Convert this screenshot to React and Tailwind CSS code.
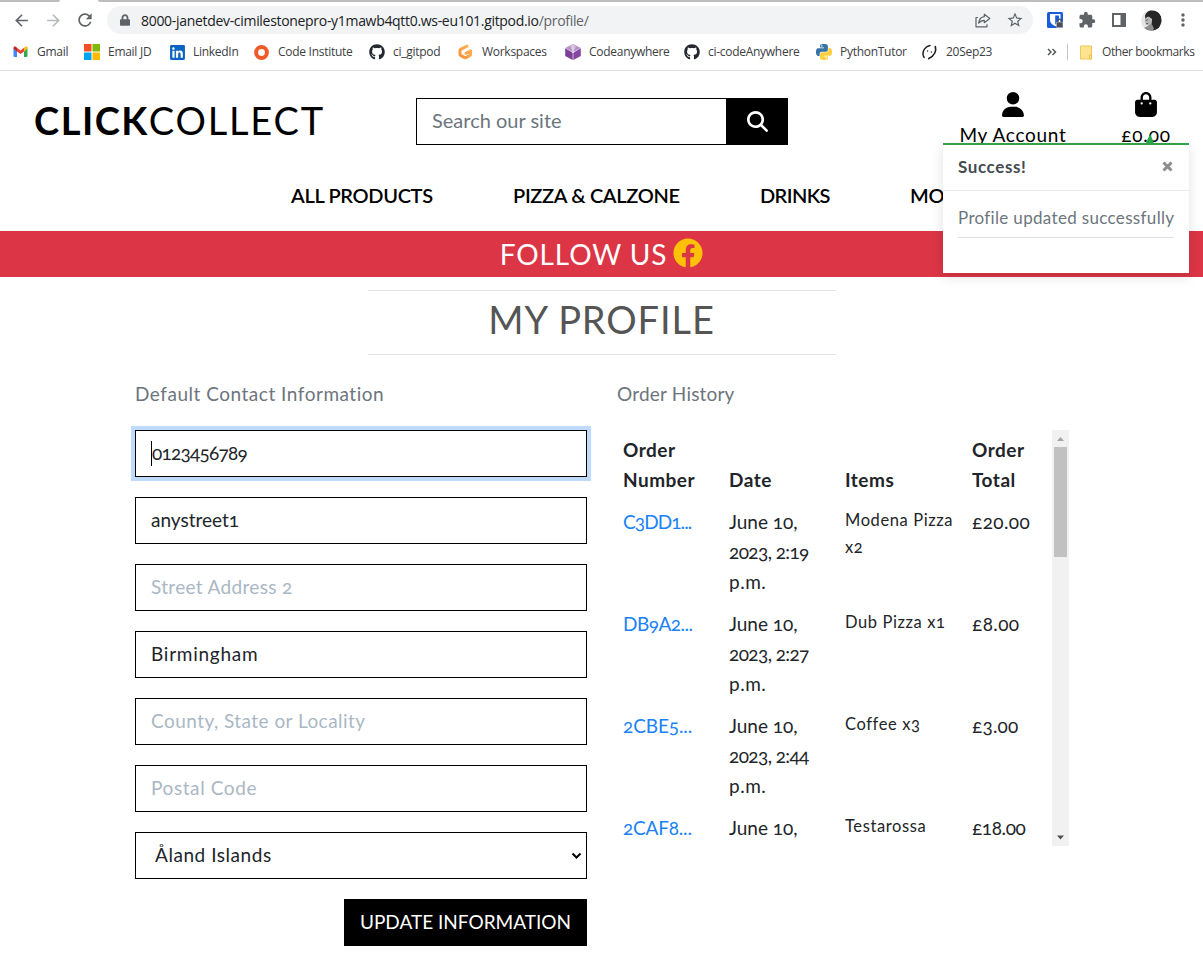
import React from "react";
import { FaFacebook, FaGithub, FaLinkedin, FaLock } from "react-icons/fa";
import { FaBagShopping, FaMagnifyingGlass, FaUser } from "react-icons/fa6";
import { MdArrowBack, MdArrowForward, MdRefresh, MdStarBorder, MdMoreVert, MdExtension } from "react-icons/md";

const GmailIcon = () => (
  <svg width="15" height="16" viewBox="0 0 15 16">
    <path d="M.5 4.2v7.9c0 .5.4.9.9.9H4V7.2z" fill="#4285f4" />
    <path d="M11 7.2V13h2.6c.5 0 .9-.4.9-.9V4.2z" fill="#34a853" />
    <path d="M11 3.8v3.6l3.5-2.6V4c0-1.3-1.4-1.9-2.3-1.2z" fill="#fbbc04" />
    <path d="M4 7.4V3.8l3.5 2.7L11 3.8v3.6L7.5 10z" fill="#ea4335" />
    <path d="M.5 4v.8L4 7.4V3.8L2.8 2.8C1.9 2.1.5 2.700.5 4z" fill="#c5221f" />
  </svg>
);

const WindowsIcon = () => (
  <svg width="16" height="16" viewBox="0 0 16 16">
    <path d="M0 0h7.500v7.500H0z" fill="#f25022" />
    <path d="M8.500 0H16v7.500H8.500z" fill="#7fba00" />
    <path d="M0 8.500h7.500V16H0z" fill="#00a4ef" />
    <path d="M8.500 8.500H16V16H8.500z" fill="#ffb900" />
  </svg>
);

const RingIcon = () => (
  <svg width="16" height="16" viewBox="0 0 16 16">
    <circle cx="7.500" cy="8.500" r="5.400" fill="none" stroke="#f05a28" strokeWidth="4" />
  </svg>
);

const GitpodIcon = () => (
  <svg width="16" height="16" viewBox="0 0 16 16">
    <defs>
      <linearGradient id="gp" x1="1" y1="0" x2="0" y2="1">
        <stop offset="0" stopColor="#ffb45b" />
        <stop offset="1" stopColor="#f9923a" />
      </linearGradient>
    </defs>
    <path d="M9 2.100 2.700 5.300c-.5.300-.7.600-.7 1.100v4c0 .5.200.8.700 1l4 2.200c.4.200.8.200 1.200 0l4-2.200c.5-.3.700-.6.700-1V6.800L8 9.300" fill="none" stroke="url(#gp)" strokeWidth="3" strokeLinecap="round" strokeLinejoin="round" />
  </svg>
);

const HexIcon = () => (
  <svg width="16" height="16" viewBox="0 0 16 16">
    <path d="M8 0l7.800 4L8 8.200.2 4z" fill="#b893c8" />
    <path d="M8 0l3.500 1.800L8 8.200 4.500 1.800z" fill="#cdb3d8" />
    <path d="M.200 4.300l7.500 4.400V16L.200 12z" fill="#7b3f98" />
    <path d="M15.800 4.300L8.300 8.700V16l7.500-4z" fill="#8347a0" />
    <path d="M8 1v8" stroke="#f3eaf6" strokeWidth="1" />
  </svg>
);

const PythonIcon = () => (
  <svg width="16" height="16" viewBox="0 0 24 24">
    <path fill="#3674a8" d="M14.25.18l.9.2.73.26.59.3.45.32.34.34.25.34.16.33.1.3.04.26.02.2-.01.13V8.5l-.05.63-.13.55-.21.46-.26.38-.3.31-.33.25-.35.19-.35.14-.33.1-.3.07-.26.04-.21.02H8.77l-.69.05-.59.14-.5.22-.41.27-.33.32-.27.35-.2.36-.15.37-.1.35-.07.32-.04.27-.02.21v3.06H3.17l-.21-.03-.28-.07-.32-.12-.35-.18-.36-.26-.36-.36-.35-.46-.32-.59-.28-.73-.21-.88-.14-1.05-.05-1.23.06-1.22.16-1.04.24-.87.32-.71.36-.57.4-.44.42-.33.42-.24.4-.16.36-.1.32-.05.24-.01h.16l.06.01h8.16v-.83H6.18l-.01-2.75-.02-.37.05-.34.11-.31.17-.28.25-.26.31-.23.38-.2.44-.18.51-.15.58-.12.64-.1.71-.06.77-.04.84-.02 1.27.05zm-6.3 1.98l-.23.33-.08.41.08.41.23.34.33.22.41.09.41-.09.33-.22.23-.34.08-.41-.08-.41-.23-.33-.33-.22-.41-.09-.41.09z" />
    <path fill="#ffcf3e" d="M21.04 6.11l.28.06.32.12.35.18.36.27.36.35.35.47.32.59.28.73.21.88.14 1.04.05 1.23-.06 1.23-.16 1.04-.24.86-.32.71-.36.57-.4.45-.42.33-.42.24-.4.16-.36.09-.32.05-.24.02-.16-.01h-8.22v.82h5.84l.01 2.76.02.36-.05.34-.11.31-.17.29-.25.25-.31.24-.38.2-.44.17-.51.15-.58.13-.64.09-.71.07-.77.04-.84.01-1.27-.04-1.07-.14-.9-.2-.73-.25-.59-.3-.45-.33-.34-.34-.25-.34-.16-.33-.1-.3-.04-.25-.02-.2.01-.13v-5.34l.05-.64.13-.54.21-.46.26-.38.3-.32.33-.24.35-.2.35-.14.33-.1.3-.06.26-.04.21-.02.13-.01h5.84l.69-.05.59-.14.5-.21.41-.28.33-.32.27-.35.2-.36.15-.36.1-.35.07-.32.04-.28.02-.21V6.07h2.09l.14.01zm-6.47 14.25l-.23.33-.08.41.08.41.23.33.33.23.41.08.41-.08.33-.23.23-.33.08-.41-.08-.41-.23-.33-.33-.23-.41-.08-.41.08z" />
  </svg>
);

const FaceIcon = () => (
  <svg width="16" height="16" viewBox="0 0 16 16" fill="none" stroke="#202124" strokeLinecap="round">
    <path d="M8 1.500C3.500 2.500.5 6.500 1 10.500c.1 1.100.5 2 1.100 2.800" strokeWidth="1.500" />
    <path d="M13.300 2.500c1.200 4-.5 9-6.500 12" strokeWidth="1.700" />
    <path d="M5.600 7v.1M9.300 8v.1" strokeWidth="1.400" />
  </svg>
);

const ShareIcon = () => (
  <svg width="16" height="15" viewBox="0 0 16 15" fill="none" stroke="#5f6368" strokeWidth="1.200" strokeLinejoin="round">
    <path d="M3 4.500H1v9.300h11v-2.600" />
    <path d="M9.300 1.200l5.500 4.300-5.500 4.200V7.300C7 7.300 5 8 3.700 10.200 4 6.500 6 4 9.300 3.700z" />
  </svg>
);

const ShieldIcon = () => (
  <svg width="16" height="16" viewBox="0 0 16 16">
    <rect width="16" height="16" rx="1.500" fill="#175ddc" />
    <path d="M3 2h10.500v6c0 3-2.500 4.800-5.200 6.200C5.500 12.800 3 11 3 8z" fill="#fff" />
    <path d="M8.200 3.500H12v4.300c0 2-1.600 3.400-3.800 4.600z" fill="#175ddc" />
    <rect x="9.300" y="10" width="6.700" height="5.500" rx="0.800" fill="#4b4f55" stroke="#fff" strokeWidth="0.500" />
    <path d="M10.900 10V8.900a1.700 1.700 0 013.400 0V10" fill="none" stroke="#4b4f55" strokeWidth="1.200" />
  </svg>
);

const SidePanelIcon = () => (
  <svg width="14" height="14" viewBox="0 0 14 14">
    <path d="M0 0h14v14H0zM2 2v10h6.500V2z" fill="#5f6368" fillRule="evenodd" />
  </svg>
);

const Avatar = () => (
  <svg width="21" height="21" viewBox="0 0 21 21">
    <defs>
      <clipPath id="av">
        <circle cx="10.500" cy="10.500" r="10.500" />
      </clipPath>
    </defs>
    <g clipPath="url(#av)">
      <rect width="21" height="21" fill="#e6e6e6" />
      <path d="M4 6C5 1.500 9-.5 13.500.8 18.500 1.500 21 6 20.500 12l-2.500 6-6 3-2-6 1-6-4-2.500L4.500 9z" fill="#262626" />
      <path d="M4.800 8L7.500 6.800l3.300 2.200-.3 4.500L8 15.500l-3-.8-1.200-3z" fill="#b9b9b9" />
      <path d="M3 18l4.500-2.500 3-2 2.500 5-2 3H5z" fill="#8d8d8d" />
      <path d="M4.500 10.300l2.500-.4M5 13.800l2.200-.4" stroke="#555" strokeWidth="0.900" />
    </g>
  </svg>
);

const FolderIcon = () => (
  <svg width="13" height="15" viewBox="0 0 13 15">
    <path d="M.5 1h11v13H.5z" fill="#ffe38f" stroke="#eec85a" />
    <path d="M9.500 14v-4h2v4z" fill="#ffe9a8" stroke="#e6b93a" strokeWidth="0.800" />
  </svg>
);

const bookmarks = [
  { label: "Gmail", icon: <GmailIcon />, width: "w-[71px]" },
  { label: "Email JD", icon: <WindowsIcon />, width: "w-[85px]" },
  { label: "LinkedIn", icon: <FaLinkedin className="size-[17px] shrink-0 text-[#0a66c2]" />, width: "w-[85px]" },
  { label: "Code Institute", icon: <RingIcon />, width: "w-[115px]" },
  { label: "ci_gitpod", icon: <FaGithub className="size-4 text-[#24292f]" />, width: "w-[89px]" },
  { label: "Workspaces", icon: <GitpodIcon />, width: "w-[107px]" },
  { label: "Codeanywhere", icon: <HexIcon />, width: "w-[119px]" },
  { label: "ci-codeAnywhere", icon: <FaGithub className="size-4 text-[#24292f]" />, width: "w-[132px]" },
  { label: "PythonTutor", icon: <PythonIcon />, width: "w-[106px]" },
  { label: "20Sep23", icon: <FaceIcon />, width: "w-[125px]" },
];

const fields = [
  { value: "anystreet1", style: "text-[#212529]" },
  { value: "Street Address 2", style: "text-[#aab7c4] tracking-[0.33px]" },
  { value: "Birmingham", style: "text-[#212529] tracking-[0.75px]" },
  { value: "County, State or Locality", style: "text-[#aab7c4] tracking-[0.45px]" },
  { value: "Postal Code", style: "text-[#aab7c4] tracking-[0.6px]" },
];

const orders = [
  { id: "C3DD1...", idStyle: "tracking-[-0.9px]", time: "2:19", items: "Modena Pizza x2", total: "£20.00", totalStyle: "tracking-[0.4px]" },
  { id: "DB9A2...", idStyle: "tracking-[-0.5px]", time: "2:27", items: "Dub Pizza x1", total: "£8.00", totalStyle: "tracking-[0.4px]" },
  { id: "2CBE5...", idStyle: "tracking-[-0.1px]", time: "2:44", items: "Coffee x3", total: "£3.00", totalStyle: "tracking-[0.2px]" },
  { id: "2CAF8...", idStyle: "tracking-[-0.2px]", time: null, items: "Testarossa", total: "£18.00", totalStyle: "tracking-[-0.4px]" },
];

function BrowserBar() {
  return (
    <div className="h-[71px] border-b border-[#dadce0] bg-white font-['Open_Sans',sans-serif] text-[#3c4043]">
      <div className="flex h-[2px] justify-between">
        <div className="w-[60px] rounded-br bg-[#bdbdbd]" />
        <div className="w-[1105px] rounded-bl bg-[#bdbdbd]" />
      </div>
      <div className="flex h-[36px] items-center pl-[12px] text-[#5f6368]">
        <MdArrowBack className="size-[19px]" />
        <MdArrowForward className="ml-[13px] size-[19px] text-[#b5b7ba]" />
        <MdRefresh className="ml-[12px] size-[20px]" />
        <div className="ml-[12px] flex h-[28px] w-[926px] items-center rounded-full bg-[#f1f3f4] pl-[13px]">
          <FaLock className="h-[12px] w-[10px]" />
          <span className="ml-[11px] whitespace-nowrap text-[14px] tracking-[-0.31px] text-[#202124]">
            8000-janetdev-cimilestonepro-y1mawb4qtt0.ws-eu101.gitpod.io<span className="text-[#5f6368]">/profile/</span>
          </span>
          <div className="ml-auto flex items-center pr-[9px]">
            <ShareIcon />
            <MdStarBorder className="ml-[15px] size-[18px]" />
          </div>
        </div>
        <div className="flex items-center pl-[14px]">
          <ShieldIcon />
          <MdExtension className="ml-[15px] size-[18px]" />
          <span className="ml-[16px]"><SidePanelIcon /></span>
          <span className="ml-[15px]"><Avatar /></span>
          <MdMoreVert className="ml-[11px] size-[20px]" />
        </div>
      </div>
      <div className="flex h-[28px] items-center pl-[13px] text-[12px] tracking-[-0.28px]">
        {bookmarks.map((b) => (
          <div key={b.label} className={`flex shrink-0 items-center whitespace-nowrap ${b.width}`}>
            <span className="flex w-6 shrink-0">{b.icon}</span>
            {b.label}
          </div>
        ))}
        <svg className="mr-[10px] shrink-0" width="10" height="8" viewBox="0 0 10 8" fill="none" stroke="#4a4d51" strokeWidth="1.400">
          <path d="M1 1l3 3-3 3M5.500 1l3 3-3 3" />
        </svg>
        <span className="h-4 w-px bg-[#c4c7cb]" />
        <span className="ml-[12px]"><FolderIcon /></span>
        <span className="ml-[9px] whitespace-nowrap tracking-[-0.4px]">Other bookmarks</span>
      </div>
    </div>
  );
}

function Toast() {
  return (
    <div className="absolute left-[943px] top-[143px] h-[130px] w-[246px] border-t-2 border-[#35a048] bg-white shadow-[0_4px_12px_rgba(0,0,0,0.12)]">
      <div className="absolute left-[203px] top-[-11px] border-x-4 border-b-[9px] border-x-transparent border-b-[#28a745]" />
      <div className="flex h-[46px] items-center justify-between border-b border-[#ececec] pb-[2px] pl-[15px] pr-[16px]">
        <strong className="text-[17px] font-bold tracking-[0.6px] text-[#454b51]">Success!</strong>
        <svg width="11" height="11" viewBox="0 0 11 11">
          <path d="M1.500 1.500l8 8M9.500 1.500l-8 8" stroke="#8c8c8c" strokeWidth="3" />
        </svg>
      </div>
      <div className="mx-[15px] flex h-[47px] items-center whitespace-nowrap border-b border-[#e0e0e0] pt-[7px] text-[17px] tracking-[0.33px] text-[#6c757d]">
        Profile updated successfully
      </div>
    </div>
  );
}

function Header() {
  return (
    <header className="h-[160px] text-black">
      <div className="flex h-[94px]">
        <div className="w-[416px] whitespace-nowrap pl-[34px] pt-[25px] text-[38px] leading-[48px]">
          <span className="font-bold tracking-[1.5px]">CLICK</span>
          <span className="tracking-[1.800px]">COLLECT</span>
        </div>
        <div className="mt-[27px] flex h-[47px] w-[372px] border border-black">
          <div className="flex w-[310px] items-center pb-[3px] pl-[15px] text-[20px] text-[#6c757d]">Search our site</div>
          <div className="flex w-[61px] items-center justify-center bg-black text-white">
            <FaMagnifyingGlass className="mb-[1px] ml-[1px] size-[21px]" />
          </div>
        </div>
        <div className="ml-[172px] flex w-[106px] flex-col items-center pt-[21px]">
          <FaUser className="h-[25px] w-[22px]" />
          <span className="mt-[4px] whitespace-nowrap text-[19px] leading-[28px] tracking-[0.7px]">My Account</span>
        </div>
        <div className="ml-[48px] flex w-[64px] flex-col items-center pt-[21px]">
          <FaBagShopping className="h-[25px] w-[22px]" />
          <span className="mt-[4px] text-[19px] leading-[28px] tracking-[0.8px]">£0.00</span>
        </div>
      </div>
      <nav className="flex h-[60px] items-center whitespace-nowrap pl-[291px] text-[20px] font-semibold tracking-[-0.33px]">
        <span className="w-[222px]">ALL PRODUCTS</span>
        <span className="w-[247px]">PIZZA &amp; CALZONE</span>
        <span className="w-[150px] tracking-[-0.6px]">DRINKS</span>
        <span>MORE</span>
      </nav>
    </header>
  );
}

function ProfileForm() {
  return (
    <section className="w-[452px]">
      <p className="h-[51px] text-[19px] leading-[30px] tracking-[0.52px] text-[#6c757d]">Default Contact Information</p>
      <div className="flex flex-col gap-5 text-[19px]">
        <div className="flex h-[47px] items-center border border-black pl-[15px] tracking-[-0.75px] text-[#212529] shadow-[0_0_0_4px_#bfdbfb]">
          <span className="h-[25px] w-px bg-black" />
          0123456789
        </div>
        {fields.map((f) => (
          <div key={f.value} className={`flex h-[47px] items-center border border-black pl-[15px] ${f.style}`}>
            {f.value}
          </div>
        ))}
        <div className="flex h-[47px] items-center justify-between border border-black pl-[19px] pr-[4px] tracking-[0.55px] text-[#212529]">
          Åland Islands
          <svg width="11" height="8" viewBox="0 0 11 8" fill="none">
            <path d="M1.500 1.500l4 4 4-4" stroke="#000" strokeWidth="2" />
          </svg>
        </div>
        <button className="h-[47px] w-[243px] self-end whitespace-nowrap bg-black text-[19px] text-white">UPDATE INFORMATION</button>
      </div>
    </section>
  );
}

function OrderHistory() {
  return (
    <section className="ml-[30px] w-[452px]">
      <p className="h-[51px] text-[19px] leading-[30px] tracking-[0.2px] text-[#6c757d]">Order History</p>
      <div className="flex h-[416px] overflow-hidden">
        <div className="w-[435px] shrink-0 text-[19px] leading-[30px] text-[#212529]">
          <div className="grid grid-cols-[106px_116px_127px_86px] items-end pb-[7px] pt-[5px] font-bold tracking-[0.5px]">
            <div className="px-[6px]">Order<br />Number</div>
            <div className="px-[6px]">Date</div>
            <div className="px-[6px]">Items</div>
            <div className="px-[6px]">Order<br />Total</div>
          </div>
          {orders.map((o) => (
            <div key={o.id} className="grid grid-cols-[106px_116px_127px_86px] pb-[7px] pt-[5px]">
              <div className={`px-[6px] text-[#1a82f7] ${o.idStyle}`}>{o.id}</div>
              <div className="whitespace-nowrap px-[6px]">
                <div>June 10,</div>
                {o.time && <div className="tracking-[-0.6px]">2023, {o.time}</div>}
                {o.time && <div className="tracking-[0.5px]">p.m.</div>}
              </div>
              <div className="px-[6px] text-[16.500px] leading-[27px] tracking-[0.6px]">{o.items}</div>
              <div className={`px-[6px] ${o.totalStyle}`}>{o.total}</div>
            </div>
          ))}
        </div>
        <div className="flex h-full w-[17px] flex-col items-center bg-[#f1f1f1]">
          <svg width="17" height="17" viewBox="0 0 17 17">
            <path d="M5 11l3.500-4 3.500 4z" fill="#a3a3a3" />
          </svg>
          <div className="h-[110px] w-[13px] bg-[#c1c1c1]" />
          <svg className="mt-auto" width="17" height="17" viewBox="0 0 17 17">
            <path d="M5 6.500h7l-3.500 4z" fill="#505050" />
          </svg>
        </div>
      </div>
    </section>
  );
}

export default function App() {
  return (
    <div className="relative h-[972px] w-[1203px] overflow-hidden bg-white">
      <BrowserBar />
      <div className="font-['Lato',sans-serif] oldstyle-nums">
        <Header />
        <div className="flex h-[46px] items-center justify-center bg-[#dc3545] text-[28px] text-white">
          <span className="tracking-[0.9px]">FOLLOW US</span>
          <FaFacebook className="mb-[2px] ml-[6px] size-[30px] text-[#ffc107]" />
        </div>
        <h2 className="mx-auto mt-[13px] flex h-[65px] w-[468px] items-center justify-center border-y border-[#e3e3e3] pb-[6px] text-[38px] tracking-[0.9px] text-[#555]">
          MY PROFILE
        </h2>
        <main className="flex pl-[135px] pt-[24px]">
          <ProfileForm />
          <OrderHistory />
        </main>
        <Toast />
      </div>
    </div>
  );
}
